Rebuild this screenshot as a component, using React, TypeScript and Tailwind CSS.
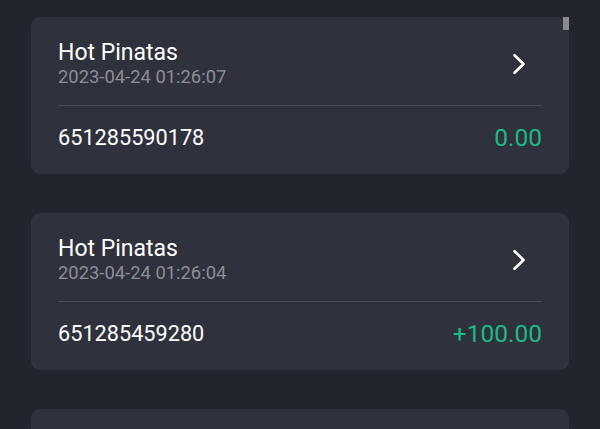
interface Record {
  game: string;
  time: string;
  orderNo: string;
  amount: string;
}

const records: Record[] = [
  { game: "Hot Pinatas", time: "2023-04-24 01:26:07", orderNo: "651285590178", amount: "0.00" },
  { game: "Hot Pinatas", time: "2023-04-24 01:26:04", orderNo: "651285459280", amount: "+100.00" },
  { game: "Hot Pinatas", time: "2023-04-24 01:25:58", orderNo: "651285312604", amount: "+50.00" },
];

function Chevron() {
  return (
    <svg width="16" height="24" viewBox="0 0 16 24" fill="none" className="mr-[15px]">
      <path d="M3.5 3.2l9 8.8-9 8.8" stroke="white" strokeWidth="2.6" strokeLinecap="round" strokeLinejoin="round" />
    </svg>
  );
}

export default function App() {
  return (
    <div
      className="relative h-[429px] w-[600px] overflow-hidden bg-[#23252e]"
      style={{ fontFamily: "Roboto, 'Noto Sans', sans-serif" }}
    >
      <div className="flex flex-col gap-[39px] px-[31px] pt-[17px]">
        {records.map((record, index) => (
          <div key={index} className="rounded-[9px] bg-[#2f313c] px-[27px]">
            <div className="flex items-center justify-between border-b border-[#474955] pb-[17px] pt-[23px]">
              <div className="flex flex-col">
                <span className="text-[23px] leading-[26px] text-white">{record.game}</span>
                <span className="text-[18.4px] leading-[22px] text-[#8b8d97]">{record.time}</span>
              </div>
              <Chevron />
            </div>
            <div className="flex h-[68px] items-center justify-between pb-[3px]">
              <span className="text-[21.7px] text-white">{record.orderNo}</span>
              <span className="text-[24.5px] text-[#1db985]">{record.amount}</span>
            </div>
          </div>
        ))}
      </div>
      <div className="absolute left-[563px] top-[17px] h-[13px] w-[6px] bg-[#8a8b8f]" />
    </div>
  );
}
